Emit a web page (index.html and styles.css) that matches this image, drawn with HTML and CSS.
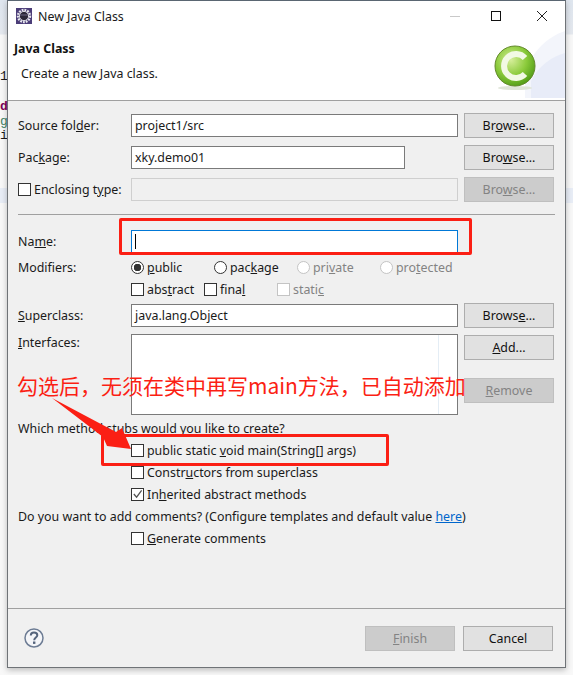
FILE: index.html
```html
<!DOCTYPE html>
<html lang="en">

<head>
    <meta charset="UTF-8">
    <title>New Java Class</title>
    <link rel="stylesheet" href="styles.css">
</head>

<body>
    <!-- editor behind the dialog -->
    <div class="behind">
        <span class="frag frag-1">1e</span>
        <span class="frag frag-2">d</span>
        <span class="frag frag-3">g</span>
        <span class="frag frag-4">i</span>
        <div class="hl hl-left"></div>
        <div class="hl hl-right"></div>
    </div>

    <div class="window">
        <div class="titlebar">
            <svg class="app-icon" width="16" height="16" viewBox="0 0 16 16">
                <rect width="16" height="16" fill="#4b3d78" />
                <circle cx="8" cy="8" r="6" fill="none" stroke="#e8e8ee" stroke-width="2.4" stroke-dasharray="1.8 1" />
                <circle cx="8" cy="8" r="4.6" fill="#2b2838" stroke="#d8d8e0" />
                <path d="M4 7h8" stroke="#6a6480" />
            </svg>
            <span class="title">New Java Class</span>
            <svg class="win-btns" width="106" height="14" viewBox="0 0 106 14">
                <path d="M0 7.5h10" stroke="#c9c9c9" />
                <rect x="41.5" y="2.5" width="9" height="9" fill="none" stroke="#111" />
                <path d="M87 2l10 10M97 2l-10 10" stroke="#222" fill="none" />
            </svg>
        </div>

        <div class="banner">
            <svg class="banner-bg" width="40" height="67" viewBox="0 0 40 67">
                <path d="M40 0C22 6 8 20 0 40V67H40Z" fill="#f3f5fb" />
                <path d="M40 22C28 25 14 34 6 50V67H40Z" fill="#e8ecf8" />
            </svg>
            <h1>Java Class</h1>
            <p>Create a new Java class.</p>
            <svg class="logo" width="42" height="46" viewBox="0 0 42 46">
                <defs>
                    <radialGradient id="ball" cx="0.4" cy="0.35" r="0.7">
                        <stop offset="0" stop-color="#d6ee9a" />
                        <stop offset="0.55" stop-color="#8ccb3c" />
                        <stop offset="1" stop-color="#4e9a14" />
                    </radialGradient>
                </defs>
                <ellipse cx="21" cy="43" rx="17" ry="2" fill="#dfe5d8" />
                <circle cx="21" cy="21" r="20" fill="url(#ball)" stroke="#63892c" />
                <path d="M31 13A12 12 0 1 0 31 29" fill="none" stroke="#f2f9e4" stroke-width="6" />
            </svg>
        </div>

        <div class="content">
            <div class="row">
                <label class="lbl">Source fol<u>d</u>er:</label>
                <div class="input">project1/src</div>
                <button class="btn">Br<u>o</u>wse...</button>
            </div>
            <div class="row">
                <label class="lbl">Pac<u>k</u>age:</label>
                <div class="input input-short">xky.demo01</div>
                <button class="btn">Bro<u>w</u>se...</button>
            </div>
            <div class="row">
                <label class="lbl check"><span class="box"></span>Enclosing t<u>y</u>pe:</label>
                <div class="input input-off"></div>
                <button class="btn btn-off">Bro<u>w</u>se...</button>
            </div>

            <div class="sep"></div>

            <div class="row row-name">
                <label class="lbl">Na<u>m</u>e:</label>
                <div class="input input-focus"><span class="caret"></span></div>
            </div>
            <div class="row row-opt">
                <label class="lbl">Modifiers:</label>
                <div class="opts">
                    <span class="opt"><span class="radio radio-on"></span><span><u>p</u>ublic</span></span>
                    <span class="opt"><span class="radio"></span><span>pac<u>k</u>age</span></span>
                    <span class="opt off"><span class="radio"></span><span>pri<u>v</u>ate</span></span>
                    <span class="opt off"><span class="radio"></span><span>pro<u>t</u>ected</span></span>
                </div>
            </div>
            <div class="row row-opt">
                <div class="lbl"></div>
                <div class="opts">
                    <span class="opt opt-abstract"><span class="box"></span><span>abs<u>t</u>ract</span></span>
                    <span class="opt opt-final"><span class="box"></span><span>fina<u>l</u></span></span>
                    <span class="opt off"><span class="box"></span><span>stati<u>c</u></span></span>
                </div>
            </div>
            <div class="row row-super">
                <label class="lbl"><u>S</u>uperclass:</label>
                <div class="input">java.lang.Object</div>
                <button class="btn">Brows<u>e</u>...</button>
            </div>
            <div class="row row-list">
                <label class="lbl"><u>I</u>nterfaces:</label>
                <div class="listbox"><span class="list-line"></span></div>
                <div class="btn-col">
                    <button class="btn"><u>A</u>dd...</button>
                    <button class="btn btn-off"><u>R</u>emove</button>
                </div>
            </div>

            <div class="line line-which"><span>Which method stubs would you like to create?</span></div>
            <div class="line indent"><span class="box"></span><span>public static <u>v</u>oid main(String[] args)</span></div>
            <div class="line indent"><span class="box"></span><span>Constr<u>u</u>ctors from superclass</span></div>
            <div class="line indent">
                <span class="box box-on">
                    <svg width="12" height="12" viewBox="0 0 12 12">
                        <path d="M2 6l3 3.5L10.500 2" fill="none" stroke="#555" stroke-width="1.400" />
                    </svg>
                </span>
                <span>In<u>h</u>erited abstract methods</span>
            </div>
            <div class="line"><span>Do you want to add comments? (Configure templates and default value <a href="#">here</a>)</span></div>
            <div class="line indent"><span class="box"></span><span><u>G</u>enerate comments</span></div>
        </div>

        <div class="footer">
            <svg class="help" width="20" height="20" viewBox="0 0 20 20">
                <circle cx="10" cy="10" r="9" fill="#f4f5f8" stroke="#6d7c94" stroke-width="1.500" />
                <path d="M6.800 7.500C6.800 5.500 8.300 4.600 10 4.600C11.900 4.600 13.300 5.700 13.300 7.300C13.300 9.500 10.200 9.700 10.200 12.200" fill="none" stroke="#55647c" stroke-width="2" />
                <rect x="9" y="13.500" width="2.400" height="2.400" fill="#55647c" />
            </svg>
            <div class="footer-btns">
                <button class="btn btn-off"><u>F</u>inish</button>
                <button class="btn">Cancel</button>
            </div>
        </div>
    </div>

    <!-- red annotations drawn on top of the screenshot -->
    <div class="mark mark-name"></div>
    <div class="mark mark-main"></div>
    <div class="note">勾选后，无须在类中再写main方法，已自动添加</div>
    <svg class="arrow" width="573" height="675" viewBox="0 0 573 675">
        <path d="M52 398L116 432L122 428L131 449L107 446L103 437Z" fill="#fb1f14" />
    </svg>
</body>

</html>
```

FILE: styles.css
```css
html,
body {
    margin: 0;
    padding: 0;
}

body {
    width: 573px;
    height: 675px;
    position: relative;
    overflow: hidden;
    background-color: #f7f7f8;
    font-family: 'Noto Sans', sans-serif;
    font-size: 12.4px;
    color: #1a1a1a;
}

/* what shows around the dialog */
.behind {
    position: absolute;
    left: 0;
    top: 0;
    width: 573px;
    height: 675px;
    background: linear-gradient(#dfe6ef 0, #e4e8ee 34px, #f8f8f8 35px);
    font-family: 'Liberation Mono', monospace;
    font-size: 13px;
}

.frag {
    position: absolute;
    left: 0;
    line-height: 14px;
}

.frag-1 {
    top: 70px;
}

.frag-2 {
    top: 100px;
    color: #7f0055;
    font-weight: bold;
}

.frag-3 {
    top: 115px;
    color: #3f7f5f;
}

.frag-4 {
    top: 129px;
}

.hl {
    position: absolute;
    top: 188px;
    height: 15px;
    background-color: #e8edf6;
}

.hl-left {
    left: 0;
    width: 7px;
}

.hl-right {
    left: 566px;
    width: 7px;
}

.window {
    position: absolute;
    left: 7px;
    top: 0;
    width: 557px;
    height: 666px;
    border: 1px solid #6f7377;
    border-top-color: #5a6672;
    background-color: #f0f0f0;
    box-shadow: 0 2px 6px rgba(0, 0, 0, 0.25);
    display: flex;
    flex-direction: column;
}

.titlebar {
    height: 30px;
    background-color: white;
    display: flex;
    align-items: center;
    padding-left: 8px;
    position: relative;
}

.title {
    margin-left: 6px;
}

.win-btns {
    position: absolute;
    left: 442px;
    top: 8px;
}

.banner {
    height: 69px;
    background-color: white;
    border-bottom: 1px solid #a0a0a0;
    position: relative;
}

.banner-bg {
    position: absolute;
    right: 0;
    bottom: 2px;
}

.banner h1 {
    margin: 0;
    padding: 9px 0 0 6px;
    font-size: 12.4px;
    line-height: 18px;
    font-weight: bold;
    color: #111;
}

.banner p {
    margin: 7px 0 0 13px;
    line-height: 18px;
}

.logo {
    position: absolute;
    left: 486px;
    top: 14px;
}

.content {
    flex: 1;
    padding: 12px 0 0 10px;
}

.row {
    display: flex;
    align-items: center;
    height: 25px;
    margin-bottom: 7px;
}

.lbl {
    width: 113px;
    display: flex;
    align-items: center;
    flex-shrink: 0;
    white-space: pre;
}

.input {
    box-sizing: border-box;
    width: 327px;
    height: 23px;
    line-height: 21px;
    padding-left: 3px;
    background-color: white;
    border: 1px solid #7a7a7a;
}

.input-short {
    width: 274px;
    margin-right: 53px;
}

.input-off {
    background-color: #f0f0f0;
    border-color: #cfcfcf;
}

.input-focus {
    border-color: #0078d7;
    border-bottom-color: transparent;
}

.caret {
    display: inline-block;
    width: 1px;
    height: 15px;
    margin-top: 3px;
    background-color: #000;
}

.input + .btn {
    margin-left: 6px;
}

.btn {
    box-sizing: border-box;
    width: 90px;
    height: 25px;
    padding: 0;
    font-family: inherit;
    font-size: 12.4px;
    color: #111;
    background-color: #e1e1e1;
    border: 1px solid #adadad;
}

.btn-off {
    background-color: #cccccc;
    border-color: #bfbfbf;
    color: #838383;
}

.sep {
    width: 537px;
    height: 1px;
    margin: 12px 0 14px;
    background-color: #a0a0a0;
}

.row-name {
    margin-bottom: 2px;
}

.row-opt {
    height: 22px;
    margin-bottom: 0;
}

.opts {
    display: flex;
    align-items: center;
}

.opt {
    display: flex;
    align-items: center;
    width: 83px;
}

.opt-abstract {
    width: 73px;
}

.opt-final {
    width: 73px;
}

.off {
    color: #838383;
}

.off .radio,
.off .box {
    border-color: #c4c4c4;
}

.radio {
    box-sizing: border-box;
    width: 13px;
    height: 13px;
    margin-right: 3px;
    border: 1px solid #333;
    border-radius: 50%;
    background-color: white;
    flex-shrink: 0;
}

.radio-on {
    background: radial-gradient(circle, #333 0, #333 3.500px, white 4px);
}

.box {
    box-sizing: border-box;
    display: inline-flex;
    width: 13px;
    height: 13px;
    margin-right: 3px;
    border: 1px solid #333;
    background-color: white;
    flex-shrink: 0;
}

.row-super {
    margin: 3px 0 6px;
}

.row-list {
    align-items: flex-start;
    height: 81px;
    margin-bottom: 0;
}

.listbox {
    box-sizing: border-box;
    width: 327px;
    height: 81px;
    background-color: white;
    border: 1px solid #7a7a7a;
    position: relative;
}

.list-line {
    position: absolute;
    left: 306px;
    top: 0;
    bottom: 0;
    width: 1px;
    background-color: #e4edf5;
}

.btn-col {
    margin: 1px 0 0 6px;
    display: flex;
    flex-direction: column;
    gap: 18px;
}

.line {
    height: 22px;
    display: flex;
    align-items: center;
}

.line-which {
    margin-top: 2px;
}

.indent {
    padding-left: 113px;
}

.box-on {
    align-items: center;
    justify-content: center;
}

a {
    color: #0066cc;
}

.footer {
    box-sizing: border-box;
    height: 59px;
    border-top: 1px solid #a0a0a0;
    padding: 17px 12px 0 16px;
    display: flex;
    justify-content: space-between;
}

.help {
    margin-top: 2px;
}

.footer-btns {
    display: flex;
    gap: 8px;
}

/* annotations */
.mark {
    position: absolute;
    box-sizing: border-box;
    border: 3px solid #fb1f14;
    border-radius: 2px;
}

.mark-name {
    left: 119px;
    top: 218px;
    width: 353px;
    height: 37px;
}

.mark-main {
    left: 101px;
    top: 434px;
    width: 288px;
    height: 32px;
}

.note {
    position: absolute;
    left: 17px;
    top: 370px;
    font-family: 'Noto Sans CJK SC', sans-serif;
    font-size: 21px;
    line-height: 30px;
    color: #fb1f14;
    white-space: nowrap;
}

.arrow {
    position: absolute;
    left: 0;
    top: 0;
}
```
